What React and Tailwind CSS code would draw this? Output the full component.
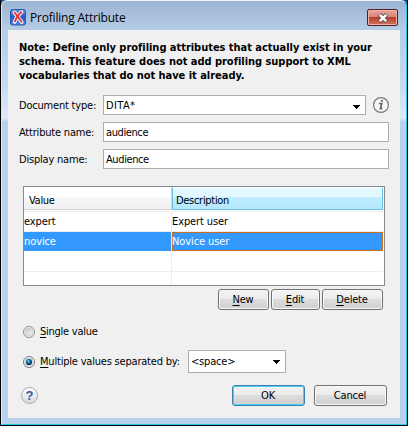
import React from "react";

const font = "font-['DejaVu_Sans_Condensed','DejaVu_Sans','Noto_Sans',sans-serif]";

function Arrow() {
  return (
    <svg width="7" height="4" viewBox="0 0 7 4" shapeRendering="crispEdges" className="shrink-0">
      <path d="M0 0h7v1H6v1H5v1H4v1H3V3H2V2H1V1H0z" fill="#000" />
    </svg>
  );
}

function Field({ label, value, labelClass, valueClass, select }) {
  return (
    <div className="mb-[7px] flex h-5 items-center">
      <div className="w-[84px] shrink-0 pt-[2px]">
        <span className={labelClass}>{label}</span>
      </div>
      <div className={`flex h-5 items-center justify-between border border-[#abadb3] bg-white pl-[2px] pr-[5px] pt-px ${select ? "w-[263px]" : "w-[286px]"}`}>
        <span className={valueClass}>{value}</span>
        {select && <span className="mt-[2px]"><Arrow /></span>}
      </div>
      {select && (
        <svg width="18" height="18" viewBox="0 0 18 18" className="ml-[6px] shrink-0">
          <circle cx="9" cy="9" r="7.4" fill="#f7f7f7" stroke="#777" strokeWidth="1.2" />
          <path d="M7 7.5h2.7L8.4 12.6h1.9" fill="none" stroke="#666" strokeWidth="1.7" />
          <circle cx="10" cy="4.8" r="1.15" fill="#666" />
        </svg>
      )}
    </div>
  );
}

function Button({ first, rest, className, primary }) {
  return (
    <button
      className={`flex h-[21px] items-center justify-center rounded-[3px] border bg-[linear-gradient(#f3f3f3_0%,#ebebeb_48%,#dddddd_50%,#cfcfcf_100%)] pr-px tracking-[-0.2px] ${
        primary ? "border-[#3c7fb1] shadow-[inset_0_0_0_1px_#45d2f5]" : "border-[#707070] shadow-[inset_0_0_0_1px_#fafafa]"
      } ${className}`}
    >
      <span className="whitespace-pre">
        {first && <span className="underline underline-offset-2">{first}</span>}
        {rest}
      </span>
    </button>
  );
}

function Radio({ checked }) {
  return (
    <svg width="12" height="12" viewBox="0 0 12 12" className="shrink-0">
      <defs>
        <linearGradient id="ring" x1="0" y1="0" x2="1" y2="1">
          <stop offset="0" stopColor="#c2c6ca" />
          <stop offset="1" stopColor="#f5f5f5" />
        </linearGradient>
        <radialGradient id="dot" cx=".4" cy=".35" r=".6">
          <stop offset="0" stopColor="#72dcff" />
          <stop offset=".45" stopColor="#1679ad" />
          <stop offset="1" stopColor="#092c49" />
        </radialGradient>
      </defs>
      <circle cx="6" cy="6" r="5.5" fill="#f4f4f4" stroke={checked ? "#777b80" : "#8e8f8f"} />
      <circle cx="6" cy="6" r="3.9" fill="url(#ring)" stroke="#bfc3c7" strokeWidth=".6" />
      {checked && <circle cx="6" cy="6" r="3.1" fill="url(#dot)" />}
    </svg>
  );
}

export default function App() {
  return (
    <div className={`h-[426px] w-[408px] overflow-hidden bg-[linear-gradient(90deg,#1c62a4_0%,#26242e_3%,#26242e_96%,#0b58a5_100%)] ${font} text-[11px] leading-[14px] text-black`}>
      <div className="h-[426px] border-b border-l border-r border-black">
        <div className="flex h-[425px] w-[406px] flex-col rounded-t-[6px] border border-b-[#27cdec] border-l-[#d9edf8] border-r-[#27cdec] border-t-[#edf5fc] bg-[linear-gradient(#9bb4d2_0px,#b5cce6_28px,#c5daf0_80px,#dce9f7_117px,#b9d1ea_121px,#b9d1ea_100%)] px-[6px] pb-[6px]">
          <header className="flex h-[29px] shrink-0 items-start justify-between">
            <div className="flex items-center pl-[2px] pt-[8px]">
              <svg width="16" height="17" viewBox="0 0 16 17">
                <defs>
                  <linearGradient id="logo" x1="0" y1="0" x2="0" y2="1">
                    <stop offset="0" stopColor="#6992e0" />
                    <stop offset=".5" stopColor="#245bc5" />
                    <stop offset="1" stopColor="#5382df" />
                  </linearGradient>
                </defs>
                <rect x=".5" y=".5" width="15" height="15.5" rx="2" fill="url(#logo)" stroke="#2858ad" />
                <path d="M4.5 3.5L11.7 13.2M11.5 3C9 5 6 9 4.7 13" stroke="#e6ecfb" strokeWidth="3.8" strokeLinecap="round" fill="none" />
                <path d="M4.2 3L12 13.3M11.7 2.7C9 5 6 9 4.8 13" stroke="#ef3029" strokeWidth="1.8" fill="none" />
              </svg>
              <h1 className="ml-[4px] font-['Open_Sans','Noto_Sans',sans-serif] text-[12px] leading-[16px] tracking-[-0.2px]">Profiling Attribute</h1>
            </div>
            <button className="mr-[2px] mt-[8px] flex h-[17px] w-[31px] items-center justify-center rounded-[2px] border border-[#53202b] bg-[linear-gradient(#eaa89e_0%,#d78073_48%,#b83e2b_50%,#d3745f_100%)] shadow-[inset_0_0_0_1px_#efb2a6]">
              <svg width="12" height="10" viewBox="0 0 12 10">
                <path d="M2.5 1.5L9.5 8.5M9.5 1.5L2.5 8.5" stroke="#53535f" strokeWidth="4.2" />
                <path d="M2.8 1.8L9.2 8.2M9.2 1.8L2.8 8.2" stroke="#fff" strokeWidth="2.5" />
              </svg>
            </button>
          </header>
          <main className="h-[388px] w-[392px] bg-[#f0f0f0] pt-[11px]">
            <p className="ml-[11px] whitespace-nowrap font-bold tracking-[-0.03px]">
              Note: Define only profiling attributes that actually exist in your<br />
              schema. This feature does not add profiling support to XML<br />
              vocabularies that do not have it already.
            </p>
            <form className="ml-[11px] mt-[12px]">
              <Field label="Document type:" value="DITA*" labelClass="tracking-[-0.2px]" valueClass="tracking-[0.4px]" select />
              <Field label="Attribute name:" value="audience" labelClass="tracking-[-0.2px]" valueClass="tracking-[-0.4px]" />
              <Field label="Display name:" value="Audience" labelClass="tracking-[-0.2px]" valueClass="tracking-[-0.4px]" />
            </form>
            <div className="ml-[15px] mt-[17px] grid h-[100px] w-[362px] grid-cols-[148px_1fr] grid-rows-[24px_21px_20px_20px_1fr] border border-[#828790] bg-white pr-px tracking-[-0.1px]">
              <div className="flex h-[23px] items-center border-b border-r border-[#d5d5d5] bg-[linear-gradient(#fff_0%,#fff_45%,#f6f7f8_50%,#f0f1f3_100%)] pl-[5px] pt-[5px] tracking-[-0.3px]">Value</div>
              <div className="flex h-[23px] items-center border border-[#69c0e5] border-t-white bg-[linear-gradient(#e3f7ff_0%,#e3f7ff_42%,#bdedff_44%,#b7e7fb_100%)] pl-[3px] pt-[4px] tracking-[-0.3px]">Description</div>
              <div className="flex items-center border-b border-r border-t border-[#ededed]">expert</div>
              <div className="flex items-center border-b border-t border-[#ededed]">Expert user</div>
              <div className="mb-px flex items-center border-r border-[#ededed] bg-[#3399ff] text-white">novice</div>
              <div className="mb-px flex items-center border border-[#cc6d1a] bg-[#3399ff] text-white"><span className="-ml-px">Novice user</span></div>
              <div className="border-b border-r border-[#ededed]" />
              <div className="border-b border-[#ededed]" />
              <div className="border-r border-[#ededed]" />
              <div />
            </div>
            <div className="mr-[17px] mt-[3px] flex justify-end gap-[2px]">
              <Button first="N" rest="ew" className="w-[51px]" />
              <Button first="E" rest="dit" className="w-[49px]" />
              <Button first="D" rest="elete" className="w-[61px]" />
            </div>
            <div className="ml-[15px] mt-[14px] flex h-4 items-center gap-[5px] tracking-[-0.25px]">
              <Radio />
              <span><span className="underline underline-offset-2">S</span>ingle value</span>
            </div>
            <div className="ml-[15px] mt-[10px] flex h-[23px] items-center tracking-[-0.2px]">
              <Radio checked />
              <span className="ml-[5px] w-[148px] whitespace-nowrap"><span className="underline underline-offset-2">M</span>ultiple values separated by:</span>
              <div className="flex h-[23px] w-[98px] items-center justify-between border border-[#abadb3] bg-white pl-[2px] pr-[5px]">
                <span>&lt;space&gt;</span><Arrow />
              </div>
            </div>
            <footer className="ml-[13px] mr-[13px] mt-[12px] flex items-center">
              <div className="flex size-[17px] items-center justify-center rounded-full border border-[#aaa] bg-[linear-gradient(#fff,#d5dae3)] font-['Liberation_Sans',sans-serif] text-[13px] font-bold leading-none text-[#3d4f96]">?</div>
              <div className="ml-auto flex gap-[9px]">
                <Button rest="OK" className="w-[73px]" primary />
                <Button rest="Cancel" className="w-[73px]" />
              </div>
            </footer>
          </main>
        </div>
      </div>
    </div>
  );
}
